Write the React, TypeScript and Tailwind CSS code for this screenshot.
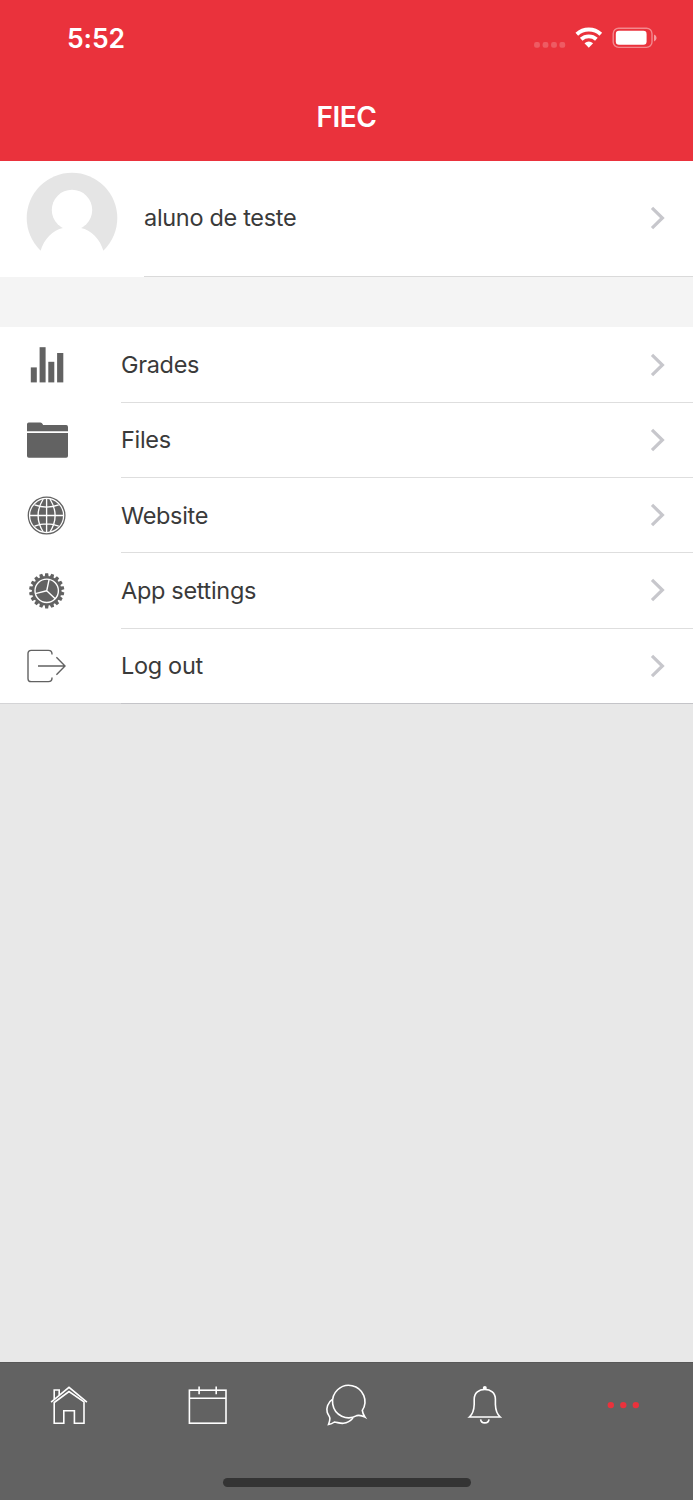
import type { ReactNode } from 'react'

function StatusIcons() {
  return (
    <svg width="124" height="22" viewBox="533 27 124 22" fill="none">
      {[537, 545.5, 554, 562.3].map((x) => (
        <rect key={x} x={x - 2.9} y="42" width="5.8" height="5.8" rx="2" fill="#fff" fillOpacity="0.2" />
      ))}
      {/* Wifi */}
      <g stroke="#fff" strokeWidth="3.9">
        <path d="M576.8 34.2A17.6 17.6 0 0 1 600.8 34.2" />
        <path d="M581.2 39.3A11.2 11.2 0 0 1 596.4 39.3" />
      </g>
      <path d="M584.5 43.2Q588.8 39.6 593.1 43.2L588.8 47.8Z" fill="#fff" />
      {/* Battery */}
      <rect x="613.2" y="28.2" width="38.8" height="19.2" rx="5.5" stroke="#fff" strokeOpacity="0.42" strokeWidth="1.4" />
      <rect x="615.8" y="30.8" width="30.8" height="13.9" rx="3.2" fill="#fff" />
      <path d="M654 34.6Q656.6 35.6 656.6 38Q656.6 40.4 654 41.4Z" fill="#fff" fillOpacity="0.5" />
    </svg>
  )
}

function Avatar() {
  return (
    <svg className="block shrink-0" width="92" height="92" viewBox="0 0 92 92">
      <defs>
        <clipPath id="avatar">
          <circle cx="46" cy="46" r="45.3" />
        </clipPath>
      </defs>
      <g clipPath="url(#avatar)">
        <rect width="92" height="78.7" fill="#e5e5e5" />
        <circle cx="46" cy="38" r="20.2" fill="#fff" />
        <path d="M14.5 79C18 67 27 57.8 37 56L38 54H54L55 56C65 57.8 74 67 77.5 79V92H14.5Z" fill="#fff" />
      </g>
    </svg>
  )
}

function Chevron() {
  return (
    <svg className="block shrink-0" width="18" height="26" viewBox="0 0 18 26" fill="none" stroke="#c7c7cc" strokeWidth="3.2">
      <path d="M3 2.8L13.4 13L3 23.2" />
    </svg>
  )
}

function GradesIcon() {
  return (
    <g fill="#626262">
      <rect x="6.8" y="26.4" width="6" height="15" />
      <rect x="15.6" y="6.2" width="6" height="35.2" />
      <rect x="24.3" y="20.8" width="6" height="20.6" />
      <rect x="33.1" y="12" width="6.2" height="29.4" />
    </g>
  )
}

function FilesIcon() {
  return (
    <g fill="#626262">
      <path d="M3 15.2V8.2Q3 6.5 4.7 6.5H16.2Q17.4 6.5 18 7.3L19.2 9.1H42.2Q44 9.1 44 10.9V15.2Z" />
      <path d="M3 17H44V40Q44 41.8 42.2 41.8H4.8Q3 41.8 3 40Z" />
    </g>
  )
}

function WebsiteIcon() {
  return (
    <>
      <circle cx="22.6" cy="23.5" r="18.3" fill="none" stroke="#626262" strokeWidth="1.3" />
      <circle cx="22.6" cy="23.5" r="16.4" fill="#626262" />
      <g fill="none" stroke="#fff" strokeWidth="1.35">
        <path d="M22.6 7V40M6 23.5H39.2M10.5 12.9Q22.6 17.3 34.7 12.9M10.5 34.1Q22.6 29.7 34.7 34.1" />
        <path d="M19.2 7Q9 23.5 19.2 40M26 7Q36.2 23.5 26 40" />
      </g>
    </>
  )
}

const gearTeeth = Array.from({ length: 18 }, (_, i) => i * 20)

function SettingsIcon() {
  return (
    <g transform="translate(22.7 23.8)">
      {gearTeeth.map((angle) => (
        <path key={angle} d="M-2 -14L-1.5 -17.6H1.5L2 -14Z" fill="#626262" transform={`rotate(${angle})`} />
      ))}
      <circle r="14.8" fill="#626262" />
      <g fill="none" stroke="#fff" strokeWidth="1.4">
        <circle r="11.7" />
        <path d="M0 0L2.4 -11.4M0 0L-11.3 2.8M0 0L8.5 8" />
      </g>
    </g>
  )
}

function LogoutIcon() {
  return (
    <g fill="none" stroke="#626262" strokeWidth="1.4">
      <path d="M28 12.6V12Q28 8.4 24.4 8.4H7.2Q4 8.4 4 11.6V36.4Q4 39.6 7.2 39.6H24.4Q28 39.6 28 36V35.4" />
      <path d="M14 24H40.8M32.4 15.2L41 24L32.4 32.8" />
    </g>
  )
}

function HomeIcon() {
  return (
    <>
      <path d="M6.1 21.2L24 6.4L41.9 21.2" />
      <path d="M9.2 20.8V42.2H18.8V29.8H29.4V42.2H39V20.8L24 10.6L9.2 21.5" />
      <path d="M9.2 18.2V9H14.2V14.2" />
    </>
  )
}

function CalendarIcon() {
  return (
    <>
      <rect x="5.4" y="9.2" width="36.6" height="33" />
      <path d="M5.4 17.2H42M15.1 5.5V13.2M32.2 5.5V13.2" />
    </>
  )
}

function MessagesIcon() {
  return (
    <g transform="translate(1 -0.2)">
      <path d="M39.3 29.6A16.2 16.2 0 1 0 33.8 34.8Q37.5 34 42 36.3Q39.5 32.5 39.3 29.6Z" />
      <path d="M9.4 18.6C4.7 21.5 3.1 27.5 4.2 31.5C5 34.3 7 35.6 6.9 37.7Q6.9 40.2 5.5 43.7Q8.8 43.3 11.4 41.2C14.3 41.4 16.5 42.8 20.5 42.5Q26 41.8 30 37.2" />
    </g>
  )
}

function BellIcon() {
  return (
    <>
      <circle cx="23.8" cy="7.1" r="2" fill="#fff" stroke="none" />
      <path d="M8.4 36H39.2C35.8 33 34.6 29.3 34.4 23.5V18.3C34.4 11.8 29.6 8.4 23.8 8.4S13.2 11.8 13.2 18.3V23.5C13 29.3 11.8 33 8.4 36Z" />
      <path d="M19.6 38.3C20.1 43 27.5 43 28 38.3" />
    </>
  )
}

function MoreIcon() {
  return (
    <g fill="#ea323c" stroke="none">
      <circle cx="10.8" cy="24.1" r="3.2" />
      <circle cx="23.3" cy="24.1" r="3.2" />
      <circle cx="35.8" cy="24.1" r="3.2" />
    </g>
  )
}

const menuItems: { label: string; icon: ReactNode }[] = [
  { label: 'Grades', icon: <GradesIcon /> },
  { label: 'Files', icon: <FilesIcon /> },
  { label: 'Website', icon: <WebsiteIcon /> },
  { label: 'App settings', icon: <SettingsIcon /> },
  { label: 'Log out', icon: <LogoutIcon /> },
]

const tabs: { label: string; icon: ReactNode }[] = [
  { label: 'Home', icon: <HomeIcon /> },
  { label: 'Calendar', icon: <CalendarIcon /> },
  { label: 'Messages', icon: <MessagesIcon /> },
  { label: 'Notifications', icon: <BellIcon /> },
  { label: 'More', icon: <MoreIcon /> },
]

function MenuRow({ label, icon }: { label: string; icon: ReactNode }) {
  return (
    <li className="group flex h-[75.3px] pl-6">
      <svg className="mt-[13.6px] block shrink-0" width="48" height="48" viewBox="0 0 48 48">
        {icon}
      </svg>
      <div className="ml-[49px] flex flex-1 items-center justify-between border-b border-[#dedede] pr-[26px] group-last:border-[#c4c4c8]">
        <span>{label}</span>
        <Chevron />
      </div>
    </li>
  )
}

export default function App() {
  return (
    <div className="flex h-[1500px] w-[693px] flex-col overflow-hidden bg-[#e8e8e8] font-['Inter',sans-serif] text-[23.5px] tracking-[-0.32px] text-[#3a3a3a]">
      <header className="h-[161px] shrink-0 bg-[#ea323c] text-white">
        <div className="flex h-[76px] items-center justify-between pr-9 pl-[67px]">
          <span className="pt-0.5 text-[26.5px] font-semibold tracking-[-0.1px]">5:52</span>
          <StatusIcons />
        </div>
        <h1 className="pt-[21px] text-center text-[28px] leading-10 font-semibold tracking-[-0.4px]">FIEC</h1>
      </header>

      <main className="flex-1">
        <div className="flex h-[116px] bg-white pl-[26px]">
          <div className="pt-[11px]">
            <Avatar />
          </div>
          <div className="ml-[26px] flex flex-1 items-center justify-between border-b border-[#dadada] pr-[26px] pb-0.5">
            <span>aluno de teste</span>
            <Chevron />
          </div>
        </div>
        <div className="h-[50.4px] bg-[#f4f4f4]" />
        {/* Last row's divider sits on top of the list's own bottom border */}
        <ul className="h-[376.5px] border-b border-[#d4d4d6] bg-white">
          {menuItems.map((item) => (
            <MenuRow key={item.label} {...item} />
          ))}
        </ul>
      </main>

      <footer className="flex h-[138px] shrink-0 flex-col items-center justify-between border-t border-[#575757] bg-[#626262] pb-[13.5px]">
        <nav className="grid w-full grid-cols-5 justify-items-center pt-[18px]">
          {tabs.map((tab) => (
            <button key={tab.label} aria-label={tab.label}>
              <svg className="block" width="48" height="48" viewBox="0 0 48 48" fill="none" stroke="#fff" strokeWidth="1.6">
                {tab.icon}
              </svg>
            </button>
          ))}
        </nav>
        <div className="h-[8.5px] w-[248px] rounded-full bg-[#343434]" />
      </footer>
    </div>
  )
}
